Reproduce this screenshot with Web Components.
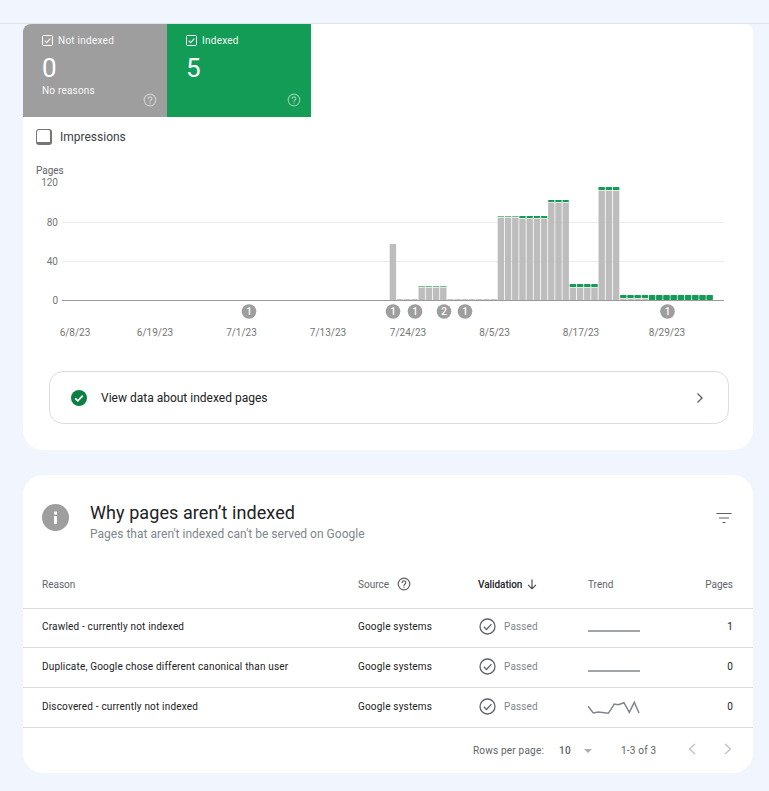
<!DOCTYPE html>
<html lang="en">
<head>
<meta charset="utf-8">
<title>Page indexing</title>
<style>
  html, body { margin: 0; background: #f1f5fd; }
  body { font-family: Roboto, "Liberation Sans", sans-serif; --cols: 316px 120px 110px 52px 1fr; }
  main { display: flex; flex-direction: column; gap: 25px; padding: 0 16px 18px 23px; }
</style>
</head>
<body>
<top-strip></top-strip>
<main>
  <index-card class="summary">
    <tile-row>
      <status-tile label="Not indexed" value="0" note="No reasons" color="#9e9e9e"></status-tile>
      <status-tile label="Indexed" value="5" color="#129c56"></status-tile>
    </tile-row>
    <impressions-toggle>Impressions</impressions-toggle>
    <coverage-chart></coverage-chart>
    <link-card>View data about indexed pages</link-card>
  </index-card>
  <index-card class="reasons">
    <card-heading heading="Why pages aren’t indexed" sub="Pages that aren't indexed can't be served on Google"></card-heading>
    <table-head></table-head>
    <reason-row reason="Crawled - currently not indexed" pages="1" trend="flat" style="--row-h:39px;--row-pad:3px"></reason-row>
    <reason-row reason="Duplicate, Google chose different canonical than user" pages="0" trend="flat"></reason-row>
    <reason-row reason="Discovered - currently not indexed" pages="0" trend="spark"></reason-row>
    <table-pager></table-pager>
  </index-card>
</main>

<script>
const helpIcon = (size, color) => `
  <svg width="${size}" height="${size}" viewBox="0 0 14 14" fill="none" stroke="${color}" stroke-width="1.2" aria-hidden="true">
    <circle cx="7" cy="7" r="5.8"/>
    <path d="M5.2 5.6a1.8 1.8 0 1 1 2.8 1.5c-.6.4-1 .7-1 1.5" stroke-linecap="round"/>
    <path d="M7 9.7v1.1"/>
  </svg>`;

class TopStrip extends HTMLElement {
  connectedCallback() {
    this.attachShadow({ mode: 'open' });
    this.shadowRoot.innerHTML = `
      <style>
        :host { display: block; height: 23px; border-bottom: 1px solid #e0e3e8; background: #f1f5fd; }
      </style>`;
  }
}

class IndexCard extends HTMLElement {
  connectedCallback() {
    this.attachShadow({ mode: 'open' });
    this.shadowRoot.innerHTML = `
      <style>
        :host { display: block; background: #fff; overflow: hidden; }
        :host(.summary) { height: 426px; border-radius: 8px 8px 20px 20px; }
        :host(.reasons) { height: 298px; border-radius: 20px; }
      </style>
      <slot></slot>`;
  }
}

class TileRow extends HTMLElement {
  connectedCallback() {
    this.attachShadow({ mode: 'open' });
    this.shadowRoot.innerHTML = `
      <style>
        :host { display: flex; }
      </style>
      <slot></slot>`;
  }
}

class StatusTile extends HTMLElement {
  connectedCallback() {
    const note = this.getAttribute('note');
    this.attachShadow({ mode: 'open' });
    this.shadowRoot.innerHTML = `
      <style>
        :host {
          display: flex; flex-direction: column; box-sizing: border-box;
          width: 144px; height: 93px; padding: 10px 10px 0 19px; color: #fff;
          background: ${this.getAttribute('color')};
        }
        .label { display: flex; align-items: center; gap: 5px; font-size: 10px; line-height: 13px; letter-spacing: .25px; opacity: .95; }
        .value { font-size: 26px; line-height: 28px; margin-top: 7px; }
        .note { font-size: 10px; line-height: 13px; margin: 2px 0 -4px; letter-spacing: .2px; opacity: .95; }
        .help { margin-top: auto; margin-bottom: 10px; align-self: flex-end; line-height: 0; }
      </style>
      <div class="label">
        <svg width="11" height="11" viewBox="0 0 11 11" fill="none" stroke="#fff">
          <rect x=".5" y=".5" width="10" height="10" rx="1"/>
          <path d="M2.7 5.6l2 2 3.6-4" stroke-width="1.2"/>
        </svg>
        ${this.getAttribute('label')}
      </div>
      <div class="value">${this.getAttribute('value')}</div>
      ${note ? `<div class="note">${note}</div>` : ''}
      <div class="help">${helpIcon(14, 'rgba(255,255,255,.5)')}</div>`;
  }
}

class ImpressionsToggle extends HTMLElement {
  connectedCallback() {
    this.attachShadow({ mode: 'open' });
    this.shadowRoot.innerHTML = `
      <style>
        :host {
          display: flex; align-items: center; gap: 8px; height: 40px; padding-left: 13px;
          font-size: 12px; color: #3c4043;
        }
        .box {
          box-sizing: border-box; width: 16px; height: 16px; border-radius: 3px;
          border: 1px solid #757575; border-right-width: 2px; border-bottom-width: 3px; background: #fff;
        }
      </style>
      <span class="box"></span><slot></slot>`;
  }
}

class CoverageChart extends HTMLElement {
  connectedCallback() {
    // bars: first day index, count, height in px, cap height, cap colour
    const runs = [
      [0, 1, 56, 0, ''],
      [1, 3, 1, 0, ''],
      [4, 4, 14, 1, '#6fbb92'],
      [8, 7, 1, 0, ''],
      [15, 3, 84, 1, '#6fbb92'],
      [18, 4, 84, 2, '#129c56'],
      [22, 3, 100, 2, '#129c56'],
      [25, 4, 16, 3, '#129c56'],
      [29, 3, 113, 3, '#129c56'],
      [32, 4, 5, 3, '#129c56'],
      [36, 9, 5, 5, '#129c56']
    ];
    const zero = 300;
    let bars = '';
    for (const [start, count, h, cap, capColor] of runs) {
      for (let i = start; i < start + count; i++) {
        const x = (389.7 + i * 7.2).toFixed(1);
        bars += `<rect x="${x}" y="${zero - h}" width="6.4" height="${h}" fill="${h > 1 ? '#bdbdbd' : '#c4c4c4'}"/>`;
        if (cap) {
          bars += `<rect x="${x}" y="${zero - h + cap}" width="6.4" height="1" fill="#e4e8e5"/>`;
          bars += `<rect x="${x}" y="${zero - h}" width="6.4" height="${cap}" rx="1" fill="${capColor}"/>`;
        }
      }
    }
    const ticks = [[120, 182.5], [80, 222], [40, 261], [0, 300.5]];
    const dates = [['6/8/23', 75], ['6/19/23', 155], ['7/1/23', 241.5], ['7/13/23', 328],
      ['7/24/23', 408], ['8/5/23', 494.5], ['8/17/23', 581], ['8/29/23', 667]];
    const notes = [[249, 1], [393, 1], [415, 1], [444, 2], [465, 1], [667.5, 1]];
    this.attachShadow({ mode: 'open' });
    this.shadowRoot.innerHTML = `
      <style>
        :host { display: block; height: 183px; }
        svg { display: block; font-family: Roboto, "Liberation Sans", sans-serif; font-size: 10px; }
        text { fill: #757575; }
        .note { fill: #fff; font-weight: 500; font-size: 10px; }
        .pages { fill: #5f6368; }
      </style>
      <svg width="730" height="183" viewBox="23 157 730 183">
        <text class="pages" x="36" y="173.500">Pages</text>
        ${ticks.map(([v, y]) => `<text x="58" y="${y + 3.5}" text-anchor="end">${v}</text>`).join('')}
        <path d="M62 222.500H724M62 261.500H724" stroke="#ececec"/>
        ${bars}
        <path d="M62 300.500H724" stroke="#9a9a9a"/>
        ${notes.map(([x, n]) => `<circle cx="${x}" cy="311.500" r="7.300" fill="#9e9e9e"/><text class="note" x="${x}" y="315" text-anchor="middle">${n}</text>`).join('')}
        ${dates.map(([d, x]) => `<text x="${x}" y="335.500" text-anchor="middle">${d}</text>`).join('')}
      </svg>`;
  }
}

class LinkCard extends HTMLElement {
  connectedCallback() {
    this.attachShadow({ mode: 'open' });
    this.shadowRoot.innerHTML = `
      <style>
        :host {
          display: flex; align-items: center; box-sizing: border-box;
          height: 53px; margin: 31px 24px 0 26px; padding: 0 24px 0 21px;
          border: 1px solid #dadce0; border-radius: 14px;
          font-size: 12px; color: #202124;
        }
        .text { flex: 1; margin-left: 14px; }
        svg { display: block; }
      </style>
      <svg width="16" height="16" viewBox="0 0 16 16">
        <circle cx="8" cy="8" r="8" fill="#0b8043"/>
        <path d="M4.2 8.3l2.6 2.5 5-5.2" fill="none" stroke="#fff" stroke-width="1.7"/>
      </svg>
      <span class="text"><slot></slot></span>
      <svg width="8" height="12" viewBox="0 0 8 12" fill="none" stroke="#5f6368" stroke-width="1.4">
        <path d="M1.5 1.5L6 6l-4.5 4.5"/>
      </svg>`;
  }
}

class CardHeading extends HTMLElement {
  connectedCallback() {
    this.attachShadow({ mode: 'open' });
    this.shadowRoot.innerHTML = `
      <style>
        :host { display: flex; align-items: center; box-sizing: border-box; height: 95px; padding: 0 21px 3px 19px; }
        .text { flex: 1; margin-left: 21px; }
        .title { font-size: 18px; line-height: 24px; color: #202124; letter-spacing: .08px; }
        .sub { font-size: 12px; line-height: 16px; margin-top: 1px; color: #80868b; letter-spacing: .02px; }
        svg { display: block; }
        .info { margin-bottom: 8px; }
        .filter { margin-bottom: 6px; }
      </style>
      <svg class="info" width="27" height="27" viewBox="0 0 27 27">
        <circle cx="13.5" cy="13.5" r="13.5" fill="#9e9e9e"/>
        <rect x="12" y="12" width="3" height="8" fill="#fff"/>
        <rect x="12" y="7.5" width="3" height="3" fill="#fff"/>
      </svg>
      <div class="text">
        <div class="title">${this.getAttribute('heading')}</div>
        <div class="sub">${this.getAttribute('sub')}</div>
      </div>
      <svg class="filter" width="16" height="12" viewBox="0 0 16 12" stroke="#5f6368" fill="none">
        <path d="M.5 1.5h15M3 6h10M6.500 10.500h3"/>
      </svg>`;
  }
}

class TableHead extends HTMLElement {
  connectedCallback() {
    this.attachShadow({ mode: 'open' });
    this.shadowRoot.innerHTML = `
      <style>
        :host {
          display: grid; grid-template-columns: var(--cols); align-items: center; box-sizing: border-box;
          height: 39px; padding: 0 20px 10px 19px; border-bottom: 1px solid #dadce0;
          font-size: 10px; color: #5f6368;
        }
        .cell { display: flex; align-items: center; }
        .source { gap: 8px; }
        .active { gap: 5px; color: #202124; font-weight: 500; letter-spacing: -.05px; white-space: nowrap; }
        .end { justify-content: flex-end; }
        svg { display: block; }
      </style>
      <div class="cell">Reason</div>
      <div class="cell source">Source ${helpIcon(14, '#5f6368')}</div>
      <div class="cell active">Validation
        <svg width="10" height="11" viewBox="0 0 10 11" fill="none" stroke="#3c4043" stroke-width="1.1"><path d="M5 .5v9M1 5.800l4 4 4-4"/></svg>
      </div>
      <div class="cell">Trend</div>
      <div class="cell end">Pages</div>`;
  }
}

class ReasonRow extends HTMLElement {
  connectedCallback() {
    const line = this.getAttribute('trend') === 'flat'
      ? 'M0 11H52'
      : 'M0 6.300L5.300 13L10.300 12L20.300 13.300L26.300 4L30.300 4.700L36 2.700L41.300 12.300L46.300 2.300L51 13';
    this.attachShadow({ mode: 'open' });
    this.shadowRoot.innerHTML = `
      <style>
        :host {
          display: grid; grid-template-columns: var(--cols); align-items: center; box-sizing: border-box;
          height: var(--row-h, 40px); padding: 0 20px var(--row-pad, 2px) 19px; border-bottom: 1px solid #dadce0;
          font-size: 10px; color: #202124; letter-spacing: .18px;
        }
        .status { display: flex; align-items: center; gap: 8px; color: #80868b; letter-spacing: .15px; }
        .status svg { margin-left: 1px; }
        .trend { margin-top: 2px; }
        .end { text-align: right; }
        svg { display: block; }
      </style>
      <div>${this.getAttribute('reason')}</div>
      <div>Google systems</div>
      <div class="status">
        <svg width="17" height="17" viewBox="0 0 17 17" fill="none" stroke="#5f6368" stroke-width="1.3">
          <circle cx="8.500" cy="8.500" r="7.500"/>
          <path d="M4.800 8.800l2.700 2.700 5-5.400"/>
        </svg>
        Passed
      </div>
      <svg class="trend" width="52" height="16" viewBox="0 0 52 16" fill="none" stroke="#80868b" stroke-width="1.500"><path d="${line}"/></svg>
      <div class="end">${this.getAttribute('pages')}</div>`;
  }
}

class TablePager extends HTMLElement {
  connectedCallback() {
    this.attachShadow({ mode: 'open' });
    this.shadowRoot.innerHTML = `
      <style>
        :host {
          display: flex; align-items: center; box-sizing: border-box; height: 45px; padding-left: 450px;
          font-size: 10px; color: #5f6368; letter-spacing: .2px;
        }
        .rows { width: 86px; }
        .size { width: 25px; font-weight: 500; }
        .tri { width: 0; height: 0; border: 4px solid transparent; border-top: 4px solid #a9adb2; border-bottom: 0; }
        .range { margin-left: 29px; width: 67px; }
        .pg { display: flex; gap: 28px; margin-bottom: 4px; }
        svg { display: block; }
      </style>
      <span class="rows">Rows per page:</span>
      <span class="size">10</span>
      <span class="tri"></span>
      <span class="range">1-3 of 3</span>
      <span class="pg">
        <svg width="8" height="12" viewBox="0 0 8 12" fill="none" stroke="#bdc1c6" stroke-width="1.300"><path d="M7 1L1.500 6L7 11"/></svg>
        <svg width="8" height="12" viewBox="0 0 8 12" fill="none" stroke="#bdc1c6" stroke-width="1.300"><path d="M1 1L6.500 6L1 11"/></svg>
      </span>`;
  }
}

customElements.define('top-strip', TopStrip);
customElements.define('index-card', IndexCard);
customElements.define('tile-row', TileRow);
customElements.define('status-tile', StatusTile);
customElements.define('impressions-toggle', ImpressionsToggle);
customElements.define('coverage-chart', CoverageChart);
customElements.define('link-card', LinkCard);
customElements.define('card-heading', CardHeading);
customElements.define('table-head', TableHead);
customElements.define('reason-row', ReasonRow);
customElements.define('table-pager', TablePager);
</script>
</body>
</html>
